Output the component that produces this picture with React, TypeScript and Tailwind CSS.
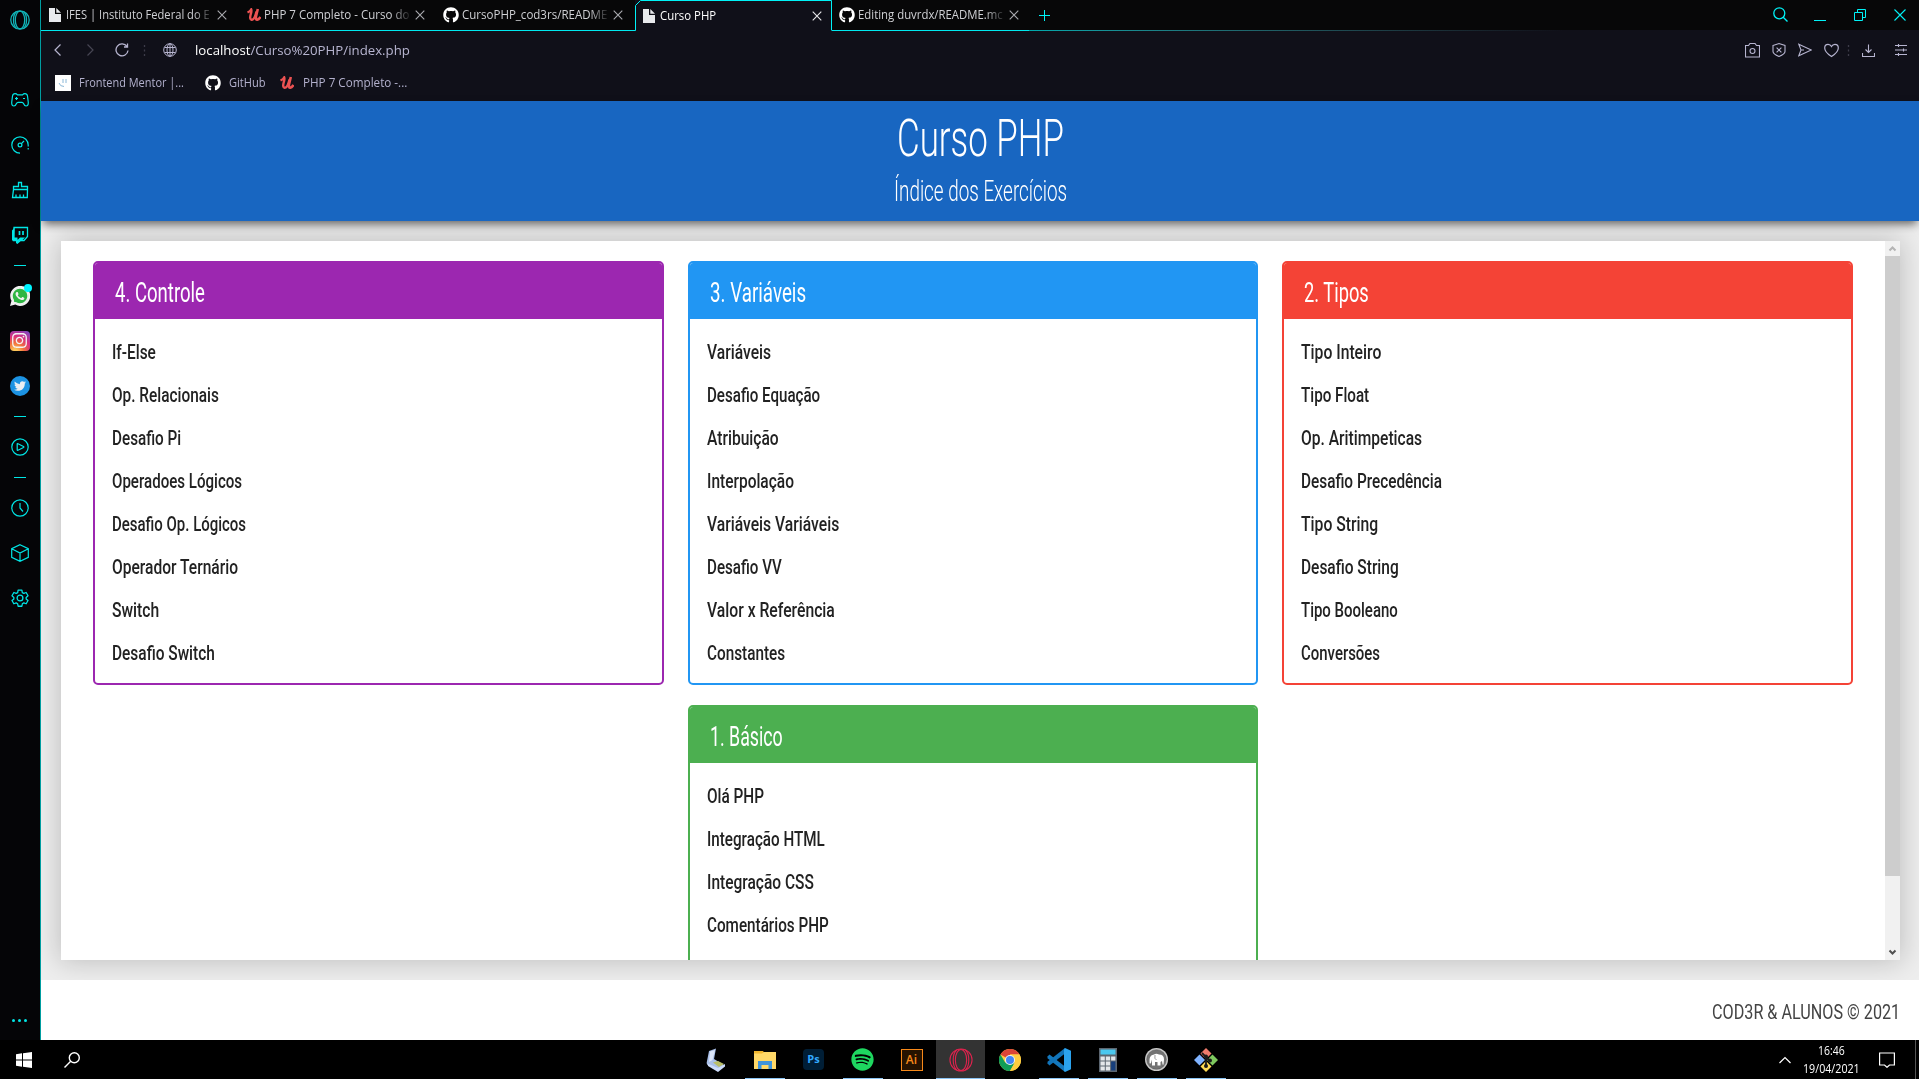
import { useLayoutEffect, useRef, useState } from "react";
import type { ReactNode } from "react";
import { FaGithub, FaWhatsapp, FaTwitter, FaSpotify, FaInstagram } from "react-icons/fa";

/** Single-line text condensed horizontally so it occupies `w` pixels. */
function Fit({ w, className = "", children }: { w: number; className?: string; children: ReactNode }) {
  const ref = useRef<HTMLSpanElement>(null);
  const [scale, setScale] = useState(1);
  useLayoutEffect(() => {
    const measure = () => {
      if (ref.current) setScale(w / ref.current.offsetWidth);
    };
    measure();
    document.fonts?.ready.then(measure);
  }, [w]);
  return (
    <span className={"block " + className} style={{ width: w }}>
      <span ref={ref} className="inline-block origin-left whitespace-nowrap align-top" style={{ transform: `scaleX(${scale})` }}>
        {children}
      </span>
    </span>
  );
}

function Svg({ s = 18, box = 18, sw = 1.3, className = "", children }: { s?: number; box?: number; sw?: number; className?: string; children: ReactNode }) {
  return (
    <svg width={s} height={s} viewBox={`0 0 ${box} ${box}`} fill="none" stroke="currentColor" strokeWidth={sw} className={"block shrink-0 " + className}>
      {children}
    </svg>
  );
}

const Close = ({ className = "" }: { className?: string }) => (
  <Svg s={10} box={10} sw={1.1} className={className}>
    <path d="M.7.7l8.6 8.6M9.3.7L.7 9.3" />
  </Svg>
);

const Page = () => (
  <svg width="12" height="14" viewBox="0 0 12 14" className="block shrink-0 fill-[#e8eaed]">
    <path d="M0 0h6v6h6v8H0zM7.300 0L12 4.700H7.300z" />
  </svg>
);

const Udemy = ({ className = "" }: { className?: string }) => (
  <svg width="14" height="14" viewBox="0 0 14 14" fill="none" stroke="#ec5252" strokeWidth="2.600" className={"block shrink-0 " + className}>
    <path d="M.5 4.500Q3 3.500 4.200 1.500Q4.800 3 3.800 6Q2.300 11.500 4.500 11.800Q7.500 12 9.500 3.500" strokeWidth="2.400" />
    <path d="M10.800 1L9 8.500Q8.500 12 10.300 11.800Q12 11.500 13.500 9" />
  </svg>
);

const OperaRing = ({ s, sw }: { s: number; sw: number }) => (
  <Svg s={s} box={20} sw={sw}>
    <circle cx="10" cy="10" r="9.200" />
    <ellipse cx="10" cy="10" rx="4.700" ry="8.800" />
    <path d="M6.500 1.600C2.500 5 2.500 15 6.500 18.400M13.500 1.600C17.500 5 17.500 15 13.500 18.400" />
  </Svg>
);

const Cell = ({ children }: { children: ReactNode }) => <div className="flex h-[45px] w-full shrink-0 items-center justify-center">{children}</div>;
const Dash = () => (
  <div className="flex h-4 w-full shrink-0 items-center justify-center">
    <span className="h-px w-3 bg-[#00e5e5]" />
  </div>
);

function Sidebar() {
  return (
    <aside className="flex w-[41px] shrink-0 flex-col items-center border-r border-[#009da0] bg-[#050507] pr-px text-[#00e5e5]">
      <div className="mb-[37px] flex h-10 items-center text-[#12b5b8]">
        <OperaRing s={20} sw={1.3} />
      </div>
      <Cell>
        <Svg s={18} sw={1.2}>
          <path d="M4 2.600Q2 2.600 1.500 5L.7 11.500Q.6 15 3 15Q4.500 15 5.500 12.500Q6 11.300 7 11.300h4Q12 11.300 12.500 12.500Q13.500 15 15 15Q17.400 15 17.300 11.500L16.500 5Q16 2.600 14 2.600Q12.500 2.600 11.500 3.800h-5Q5.500 2.600 4 2.600z" />
          <path d="M5.500 6v3M4 7.500h3M12 7.500h2" />
        </Svg>
      </Cell>
      <Cell>
        <Svg s={18} sw={1.2}>
          <path d="M9 17.200A8.200 8.200 0 1 1 17.200 9" />
          <path d="M17.200 9v5" strokeDasharray="1.500 1.500" />
          <circle cx="9" cy="9" r="1.900" />
          <path d="M10.400 7.600L13 5" />
        </Svg>
      </Cell>
      <Cell>
        <Svg s={18} sw={1.3}>
          <path d="M2.500 8.500V5.500h5V1.500h3v4h6v3zM2.500 8.500L1.500 16.500h14.800l.2-8M5 16.500v-3M9 16.500v-3M12.500 16.500v-3" />
        </Svg>
      </Cell>
      <Cell>
        <Svg s={18} sw={1.3}>
          <path d="M3 1.500h13.500v9l-3.500 4H9.500L6.500 17v-2.500H2.500z" />
          <path d="M1 4.500L3.500 1.500v10h3v2.500l2.500-2.500h5l-3 3H9l-2.500 2.800H5V14.500H1z" fill="currentColor" stroke="none" />
          <path d="M8.500 5v4M12 5v4" strokeWidth="1.700" />
        </Svg>
      </Cell>
      <Dash />
      <Cell>
        <div className="relative">
          <svg width="20" height="20" viewBox="0 0 20 20" className="block">
            <path d="M0 20l1.500-5.200A10 10 0 1 1 5.300 18.600z" fill="#f1f1f1" />
            <circle cx="10.100" cy="9.900" r="8.200" fill="#2fb643" />
          </svg>
          <FaWhatsapp className="absolute top-0 left-0 size-5 text-[#f1f1f1]" />
          <span className="absolute -top-[2px] -right-[2px] size-2 rounded-full bg-[#00f5ff]" />
        </div>
      </Cell>
      <Cell>
        <div className="flex size-5 items-center justify-center rounded bg-[radial-gradient(circle_at_25%_105%,#fdc75a_10%,#f2703c_35%,#d92e7f_62%,#6b4bd0_100%)] text-[#f3f3f3]">
          <FaInstagram size={17} />
        </div>
      </Cell>
      <Cell>
        <div className="flex size-5 items-center justify-center rounded-full bg-[#1c93e3] text-[#e9eef2]">
          <FaTwitter size={12} />
        </div>
      </Cell>
      <Dash />
      <Cell>
        <Svg s={18} sw={1.2}>
          <circle cx="9" cy="9" r="8.200" />
          <path d="M6.200 6Q6.200 5.400 7 5.700L12.500 8.500Q13.300 9 12.500 9.500L7 12.300Q6.200 12.600 6.200 12z" />
        </Svg>
      </Cell>
      <Dash />
      <Cell>
        <Svg s={18} sw={1.2}>
          <circle cx="9" cy="9" r="8.200" />
          <path d="M9 4v5l3 3.500" />
        </Svg>
      </Cell>
      <Cell>
        <Svg s={18} sw={1.2}>
          <path d="M9 .7l8.300 4v8.600L9 17.300.7 13.300V4.700zM.7 4.700L9 9l8.300-4.300M9 9v8.300" />
        </Svg>
      </Cell>
      <Cell>
        <Svg s={18} box={24} sw={1.7}>
          <path d="M9.500 1.500h5l.6 3.300 2 1.100 3.100-1.200 2.500 4.300-2.500 2.200v2l2.500 2.200-2.500 4.300-3.100-1.200-2 1.200-.6 3.300h-5l-.6-3.300-2-1.200-3.100 1.200L1.300 15.400l2.500-2.200v-2L1.300 9l2.500-4.300 3.100 1.200 2-1.100z" strokeLinejoin="round" />
          <circle cx="12" cy="12" r="3.900" />
        </Svg>
      </Cell>
      <div className="mt-auto flex h-10 items-center gap-[3px]">
        <span className="size-[3px] rounded-full bg-current" />
        <span className="size-[3px] rounded-full bg-current" />
        <span className="size-[3px] rounded-full bg-current" />
      </div>
    </aside>
  );
}

function Tab({ icon, title, w, className = "" }: { icon: ReactNode; title: string; w: number; className?: string }) {
  return (
    <div className={"flex h-full items-center border-b border-[#00e8ee] text-[#cfd0d4] " + className}>
      {icon}
      <div className="ml-[3px] w-[145px] overflow-hidden [mask-image:linear-gradient(to_right,black_88%,rgba(0,0,0,0.15))]">
        <Fit w={w}>{title}</Fit>
      </div>
      <Close className="ml-[6px] text-[#aaabb0]" />
    </div>
  );
}

function Browser() {
  return (
    <header className="h-[101px] shrink-0 bg-[#101019] font-['Open_Sans','Noto_Sans',sans-serif] text-xs leading-4">
      <div className="flex h-[31px] bg-[#070708]">
        <Tab className="w-[200px] pl-2" icon={<span className="mr-[2px]"><Page /></span>} title="IFES | Instituto Federal do E" w={144} />
        <Tab className="w-[197px] pl-[6px]" icon={<Udemy />} title="PHP 7 Completo - Curso do" w={145} />
        <Tab className="w-[197px] pl-[5px]" icon={<FaGithub className="size-4 shrink-0 text-white" />} title="CursoPHP_cod3rs/README" w={145} />
        <div className="relative flex h-full w-[197px] items-center bg-[#101019] pl-2 text-white">
          <svg width="197" height="31" viewBox="0 0 197 31" fill="none" stroke="#00f2f7" className="absolute top-0 left-0">
            <path d="M0 30.500h.5V5.500L5.500.5h191v30" />
          </svg>
          <Page />
          <Fit w={56} className="ml-[5px]">Curso PHP</Fit>
          <Close className="ml-auto mr-[10px] text-[#e8e8ea]" />
        </div>
        <Tab className="w-[197px] border-[#00cdd2] pl-[7px]" icon={<FaGithub className="size-4 shrink-0 text-white" />} title="Editing duvrdx/README.mc" w={145} />
        <div className="flex h-full flex-1 flex-col text-[#00f2f7]">
          <div className="flex flex-1 items-center">
            <Svg s={11} box={11} sw={1} className="ml-[10px]">
              <path d="M5.500 0v11M0 5.500h11" />
            </Svg>
            <div className="ml-auto mr-[13px] flex items-center">
              <Svg s={15} box={15} sw={1.3} className="mr-[26px] mb-[2px]">
                <circle cx="6.300" cy="6.300" r="5.500" />
                <path d="M10.200 10.200l4.300 4.300" />
              </Svg>
              <span className="mt-[11px] mr-7 h-px w-3 bg-current" />
              <Svg s={12} box={12} sw={1} className="mr-7">
                <path d="M.5 3.500h8v8h-8zM3.500 3.500v-3h8v8h-3" />
              </Svg>
              <Svg s={12} box={12} sw={1.1}>
                <path d="M.5.5l11 11M11.500.5l-11 11" />
              </Svg>
            </div>
          </div>
          <div className="h-px bg-linear-to-r from-[#00a9ad] to-[#101019] to-60%" />
        </div>
      </div>

      <div className="flex h-[38px] items-center pl-3 text-[#b7b5d0]">
        <Svg s={12} box={12} sw={1.2}><path d="M7.500.5L2 6l5.500 5.500" /></Svg>
        <Svg s={12} box={12} sw={1.200} className="ml-[18px] text-[#474653]"><path d="M4.500.5L10 6l-5.500 5.500" /></Svg>
        <Svg s={14} box={14} sw={1.3} className="ml-5"><path d="M12 3.500A6 6 0 1 0 13 7.500M12.500.5v3.500H9" /></Svg>
        <Svg s={3} box={3} className="ml-[14px] text-[#3d3c49] overflow-visible"><path d="M1.500-4v2M1.500.5v2M1.500 5v2" /></Svg>
        <Svg s={14} box={14} sw={1} className="ml-[17px]">
          <circle cx="7" cy="7" r="6.300" />
          <ellipse cx="7" cy="7" rx="3" ry="6.300" />
          <path d="M7 .7v12.600M1.500 4.500h11M1.500 9.500h11" />
        </Svg>
        <Fit w={215} className="ml-[18px] text-[13px]">
          <span className="text-white">localhost</span>/Curso%20PHP/index.php
        </Fit>
        <div className="ml-auto flex items-center pr-3">
          <Svg s={15} box={15} sw={1.100} className="mr-3"><path d="M.5 2.500h3l1.500-2h5l1.500 2h3v11.500H.5z" /><circle cx="7.500" cy="8" r="2.500" /></Svg>
          <Svg s={14} box={14} sw={1.100} className="mr-3"><path d="M1 2.500L7 .6l6 1.900v6Q13 11 7 13.500 1 11 1 8.500zM4.600 4.600l4.800 4.800M9.400 4.600L4.600 9.400" /></Svg>
          <Svg s={14} box={14} sw={1.100} className="mr-3"><path d="M.8 1.200L13.300 7 .8 12.800 3 7zM3 7h3" /></Svg>
          <Svg s={15} box={15} sw={1.200} className="mr-2"><path d="M7.500 13.500C3 10.500.7 8 .7 4.900.7 2.800 2.300 1.300 4.100 1.300c1.400 0 2.700.8 3.400 2.200.7-1.400 2-2.200 3.400-2.200 1.800 0 3.400 1.500 3.400 3.600 0 3.100-2.300 5.600-6.800 8.600z" /></Svg>
          <Svg s={3} box={3} className="mr-3 text-[#3d3c49] overflow-visible"><path d="M1.500-4v2M1.500.5v2M1.500 5v2" /></Svg>
          <Svg s={13} box={13} sw={1.100} className="mr-5"><path d="M6.500.5v8M3.500 5.500l3 3 3-3M.5 9v3.500h12V9" /></Svg>
          <Svg s={12} box={12} sw={1.100}><path d="M0 1.500h12M0 6h12M0 10.500h12M3.500 0v3M8.500 4.500v3M3.500 9v3" /></Svg>
        </div>
      </div>

      <div className="flex h-7 items-center pl-[14px] text-[#b3b1cd]">
        <span className="flex size-4 items-center justify-center bg-white">
          <Svg s={10} box={10} sw={1} className="text-[#8ab8d8]"><path d="M1 5q1 3.500 5 3.500M5 1v4M8 1v4" /></Svg>
        </span>
        <Fit w={105} className="ml-2">Frontend Mentor |...</Fit>
        <FaGithub className="ml-[21px] size-4 text-white" />
        <Fit w={37} className="ml-2">GitHub</Fit>
        <Udemy className="ml-[14px]" />
        <Fit w={104} className="ml-[9px]">PHP 7 Completo -...</Fit>
      </div>
    </header>
  );
}

type Module = { title: string; w: number; border: string; bg: string; items: [string, number][] };

const modules: Module[] = [
  { title: "4. Controle", w: 90, border: "border-[#9c27b0]", bg: "bg-[#9c27b0]", items: [["If-Else", 44], ["Op. Relacionais", 107], ["Desafio Pi", 69], ["Operadoes Lógicos", 130], ["Desafio Op. Lógicos", 134], ["Operador Ternário", 126], ["Switch", 47], ["Desafio Switch", 103]] },
  { title: "3. Variáveis", w: 96, border: "border-[#2196f3]", bg: "bg-[#2196f3]", items: [["Variáveis", 64], ["Desafio Equação", 113], ["Atribuição", 72], ["Interpolação", 87], ["Variáveis Variáveis", 132], ["Desafio VV", 75], ["Valor x Referência", 128], ["Constantes", 78]] },
  { title: "2. Tipos", w: 65, border: "border-[#f44336]", bg: "bg-[#f44336]", items: [["Tipo Inteiro", 80], ["Tipo Float", 68], ["Op. Aritimpeticas", 121], ["Desafio Precedência", 141], ["Tipo String", 77], ["Desafio String", 98], ["Tipo Booleano", 97], ["Conversões", 79]] },
  { title: "1. Básico", w: 73, border: "border-[#4caf50]", bg: "bg-[#4caf50]", items: [["Olá PHP", 57], ["Integração HTML", 118], ["Integração CSS", 107], ["Comentários PHP", 122]] },
];

function Card({ m, className = "" }: { m: Module; className?: string }) {
  return (
    <section className={"h-[424px] overflow-hidden rounded-[5px] border-2 bg-white " + m.border + " " + className}>
      <h3 className={"h-14 pt-1 pl-5 text-[27px] leading-[52px] font-normal text-white " + m.bg}>
        <Fit w={m.w}>{m.title}</Fit>
      </h3>
      <ul className="pt-3 pl-[17px] text-[21px] leading-[43px] font-medium text-[#222]">
        {m.items.map(([t, w]) => (
          <li key={t} className="h-[43px]">
            <Fit w={w}>{t}</Fit>
          </li>
        ))}
      </ul>
    </section>
  );
}

function Site() {
  return (
    <div className="flex min-h-0 flex-1 flex-col bg-[#eee] font-['Roboto',sans-serif]">
      <header className="relative z-10 flex h-[120px] shrink-0 flex-col items-center bg-[#1866c1] text-white shadow-[0_5px_9px_-2px_rgba(0,0,0,0.6)]">
        <h1 className="text-[52px] leading-[76px] font-light"><Fit w={167}>Curso PHP</Fit></h1>
        <h2 className="text-[29px] leading-7 font-light"><Fit w={173}>Índice dos Exercícios</Fit></h2>
      </header>
      <main className="flex min-h-0 flex-1 flex-col overflow-hidden py-5 pr-[19px] pl-5">
        <div className="flex min-h-0 flex-1 bg-white shadow-[0_0_26px_2px_rgba(0,0,0,0.2)]">
          <div className="grid flex-1 grid-cols-3 content-start gap-x-6 gap-y-5 overflow-hidden px-8 pt-5">
            {modules.map((m, i) => (
              <Card key={m.title} m={m} className={i === 3 ? "col-start-2" : ""} />
            ))}
          </div>
          <div className="flex w-[15px] shrink-0 flex-col items-center bg-[#f1f1f1]">
            <Svg s={15} box={15} sw={2} className="text-[#b4b4b4]"><path d="M4.500 9.500l3-3 3 3" /></Svg>
            <div className="h-[620px] w-full bg-[#cdcdcd]" />
            <Svg s={15} box={15} sw={2} className="mt-auto text-[#505050]"><path d="M4.500 5.500l3 3 3-3" /></Svg>
          </div>
        </div>
      </main>
      <footer className="flex h-[60px] shrink-0 justify-end bg-white pt-1 pr-[19px] text-[21px] leading-[56px] text-[#444]">
        <Fit w={188}>COD3R &amp; ALUNOS © 2021</Fit>
      </footer>
    </div>
  );
}

function TaskItem({ line = false, active = false, children }: { line?: boolean; active?: boolean; children: ReactNode }) {
  return (
    <div className={"relative flex h-full w-[49px] items-center justify-center " + (active ? "bg-[#333]" : "")}>
      {children}
      {line && <span className={"absolute bottom-0 h-px bg-[#8ac4f5] " + (active ? "w-full" : "w-10")} />}
    </div>
  );
}

function Taskbar() {
  return (
    <footer className="flex h-[39px] shrink-0 items-center bg-black font-['Open_Sans','Noto_Sans',sans-serif] text-white">
      <svg width="16" height="16" viewBox="0 0 16 16" fill="white" className="ml-4">
        <path d="M0 2.200l6-.9v6.200H0zM7 1.200L16 0v7.500H7zM0 8.500h6v6.200l-6-.9zM7 8.500h9V16l-9-1.200z" />
      </svg>
      <Svg s={16} box={16} sw={1.400} className="ml-8">
        <circle cx="10.300" cy="5.700" r="5" />
        <path d="M6.700 9.300L.5 15.500" />
      </Svg>
      <div className="ml-[611px] flex h-full">
        <TaskItem>
          <svg width="20" height="24" viewBox="0 0 20 24">
            <path d="M3 3L10 .5 8 11 18 17 12 22 2 17Q0 16 1 13z" fill="#a9bfe8" />
            <path d="M4 3.500L9 2 6.500 12 3 14z" fill="#dce6fa" />
            <path d="M7 14.500l5-1.500 6 3-5 3z" fill="#b9bd67" />
            <path d="M1.500 15.500L12 20l7-4v2.500L12 24 2 18z" fill="#cddcfa" />
          </svg>
        </TaskItem>
        <TaskItem line>
          <svg width="22" height="20" viewBox="0 0 22 20">
            <path d="M0 1h9l1.500 2H22v16H0z" fill="#f0b52d" />
            <path d="M0 3.500h8L10 2h12v17H0z" fill="#ffd868" />
            <path d="M4 19v-8h14v8h-3.500v-4h-7v4z" fill="#3f94dc" />
          </svg>
        </TaskItem>
        <TaskItem>
          <div className="flex size-[21px] items-center justify-center rounded bg-[#001e36] text-[11px] font-bold text-[#31a8ff]">Ps</div>
        </TaskItem>
        <TaskItem line>
          <FaSpotify size={23} className="text-[#1ed760]" />
        </TaskItem>
        <TaskItem>
          <div className="flex size-[22px] items-center justify-center border border-[#f7891a] bg-[#261300] text-[12px] font-semibold text-[#f7891a]">Ai</div>
        </TaskItem>
        <TaskItem line active>
          <span className="text-[#e0234e]"><OperaRing s={24} sw={0.9} /></span>
        </TaskItem>
        <TaskItem>
          <svg width="22" height="22" viewBox="0 0 22 22">
            <circle cx="11" cy="11" r="11" fill="#ffcd40" />
            <path d="M11 11L1.470 5.500A11 11 0 0 1 20.530 5.500H11z" fill="#db4437" />
            <path d="M1.470 5.500A11 11 0 0 0 11 22l4.700-8.300L11 11 6.300 13.700z" fill="#0f9d58" />
            <path d="M11 5.500h9.500A11 11 0 0 1 11 22l4.700-8.300z" fill="#ffcd40" />
            <circle cx="11" cy="11" r="5" fill="#f1f1f1" />
            <circle cx="11" cy="11" r="4" fill="#4285f4" />
          </svg>
        </TaskItem>
        <TaskItem line>
          <svg width="24" height="24" viewBox="0 0 24 24">
            <path d="M.5 8.500L2.500 6.500 18 18.500V24L.5 10.200z" fill="#1478bd" />
            <path d="M.5 15.500L2.500 17.500 18 5.500V0L.5 13.800z" fill="#1173b8" />
            <path d="M18 0l6 2.800v18.400L18 24l-1-1.500V1.500z" fill="#2ba3ee" />
          </svg>
        </TaskItem>
        <TaskItem line>
          <svg width="18" height="24" viewBox="0 0 18 24">
            <path d="M0 0h18v24H0z" fill="#5c6670" />
            <path d="M1.500 1.500h15v5h-15z" fill="#4bc8ef" />
            <path d="M1.500 8.500h4.300v4H1.500zM6.800 8.500h4.300v4H6.800zM12.100 8.500h4.300v4h-4.300zM1.500 13.500h4.300v4H1.500zM6.800 13.500h4.300v4H6.800zM1.500 18.500h4.300v4H1.500zM6.800 18.500h4.300v4H6.800z" fill="#e4e7ea" />
            <path d="M12.100 13.500h4.300v9h-4.300z" fill="#173f7c" />
          </svg>
        </TaskItem>
        <TaskItem line>
          <svg width="23" height="23" viewBox="0 0 23 23">
            <circle cx="11.500" cy="11.500" r="11.500" fill="#c9c9c9" />
            <circle cx="11.500" cy="11.500" r="9.800" fill="#737373" stroke="#555" strokeWidth=".5" />
            <path d="M4.500 15Q3.500 7 9 6.500q2-1.500 5 0 5 0 5 5l-.5 5q-1 .5-1-.5l-.5-3-1.500 1v3.500h-3V14h-2.500v3.500h-3v-6l-1 3.500q-1 1-1.500 0z" fill="#fff" />
            <path d="M10 7q-1 4 1.500 5" fill="none" stroke="#737373" strokeWidth=".7" />
          </svg>
        </TaskItem>
        <TaskItem line>
          <svg width="24" height="24" viewBox="0 0 24 24">
            <path d="M12 0l5.500 5.500-5.500 5.500-5.500-5.500z" fill="#ef7b6b" />
            <path d="M5.500 6.500L11 12l-5.500 5.500L0 12z" fill="#80b3ff" />
            <path d="M18.500 6.500L24 12l-5.500 5.500L13 12z" fill="#7fc95f" />
            <path d="M12 13l5.500 5.500L12 24l-5.500-5.500z" fill="#ffdc55" />
            <path d="M8 5l4 4v10M12 9l4 4" stroke="#1a1a1a" strokeWidth="1.800" fill="none" />
            <circle cx="12" cy="8.500" r="2" fill="#1a1a1a" />
            <circle cx="16" cy="12.500" r="2" fill="#1a1a1a" />
            <circle cx="12" cy="18" r="2" fill="#1a1a1a" />
          </svg>
        </TaskItem>
      </div>
      <Svg s={12} box={12} sw={1.200} className="ml-auto"><path d="M.5 9L6 3.500 11.500 9" /></Svg>
      <div className="ml-3 flex h-full w-[57px] flex-col items-center pt-[2px] text-xs leading-[18px]">
        <Fit w={27}>16:46</Fit>
        <Fit w={57}>19/04/2021</Fit>
      </div>
      <Svg s={16} box={16} sw={1.200} className="ml-[19px]"><path d="M.6 1h14.800v12H10.500L8 15.300 5.500 13H.6z" /></Svg>
      <span className="mr-[3px] ml-5 h-full w-px bg-[#555]" />
    </footer>
  );
}

export default function App() {
  return (
    <div className="flex h-[1079px] w-[1919px] flex-col overflow-hidden bg-black">
      <div className="flex min-h-0 flex-1">
        <Sidebar />
        <div className="flex min-w-0 flex-1 flex-col">
          <Browser />
          <Site />
        </div>
      </div>
      <Taskbar />
    </div>
  );
}
